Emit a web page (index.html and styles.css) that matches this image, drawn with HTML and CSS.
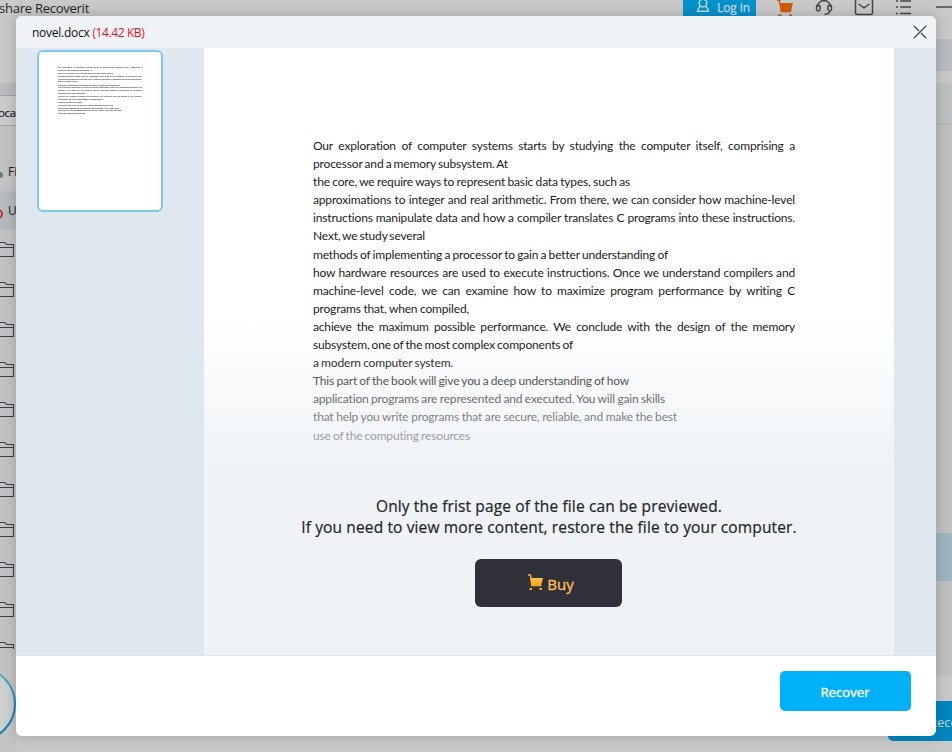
FILE: index.html
```html
<!DOCTYPE html>
<html lang="en">
<head>
<meta charset="utf-8">
<title>Recoverit</title>
<link rel="stylesheet" href="styles.css">
</head>
<body>
<svg width="0" height="0" class="defs" aria-hidden="true">
  <linearGradient id="ring" x1="0" y1="0" x2="0" y2="1"><stop offset="0" stop-color="#5bbfae"/><stop offset=".5" stop-color="#1585bd"/><stop offset="1" stop-color="#1179b4"/></linearGradient>
  <linearGradient id="gold" x1="0" y1="0" x2="0" y2="1"><stop offset="0" stop-color="#ffc24c"/><stop offset="1" stop-color="#ff9f1c"/></linearGradient>
  <symbol id="folder" viewBox="0 0 20 20"><path d="M0 2.500h4.500l2.500 2h6.500v12H0M0 7.500h13.500" fill="none" stroke="#3d4043" stroke-width="1.1"/></symbol>
</svg>
<div class="app">
  <header class="titlebar">
    <span class="brand">share Recoverit</span>
    <span class="tools">
      <span class="login"><svg width="14" height="16" viewBox="0 0 14 16" fill="none" stroke="#c5dce8" stroke-width="1.4"><circle cx="7" cy="5" r="3.8"/><path d="M4.500 8 Q2.300 9.500 1.500 13.300H12.500Q11.700 9.500 9.500 8"/></svg>Log in</span>
      <svg class="cart" width="18" height="18" viewBox="0 0 18 18"><path d="M1 .5h2.500l1.800 11h9.700" fill="none" stroke="#cf5808" stroke-width="1.400"/><path d="M3.600 3h13.400l-2 8.500h-10z" fill="#d45c08"/><path d="M2 14.500h3.500v2H2zM13 14.500h3v2h-3z" fill="#c85a12"/></svg>
      <svg class="phones" width="18" height="18" viewBox="0 0 18 18" fill="none" stroke="#45484b" stroke-width="1.500"><path d="M2.500 7C2.500 -1.500 15.500 -1.500 15.500 7"/><rect x="1.500" y="5" width="3.500" height="6" rx="1.700"/><rect x="13" y="5" width="3.500" height="6" rx="1.700"/><path d="M15 11.500Q13.500 14.300 9.500 14.500"/></svg>
      <svg class="mail" width="20" height="18" viewBox="0 0 20 18" fill="none" stroke="#45484b" stroke-width="1.500"><rect x="1.500" y="-1" width="17" height="15.500" rx="2"/><path d="M4.500 4l5.500 3.800L15.500 4"/></svg>
      <svg class="list" width="18" height="18" viewBox="0 0 18 18" fill="none" stroke="#45484b" stroke-width="1.500"><path d="M1 1h2m2 0h11M1 7h2m2 0h11M1 13.500h2m2 0h11"/></svg>
      <span class="minimize"></span>
    </span>
  </header>
  <div class="workspace">
    <aside class="tree">
      <div class="panel-head"></div>
      <div class="band"></div>
      <div class="tab">oca</div>
      <div class="gap"></div>
      <div class="item"><i class="dot"></i>Fi</div>
      <div class="item active"><i class="dot red"></i>U</div>
      <ul class="folders">
        <li><svg width="20" height="20"><use href="#folder"/></svg></li>
        <li><svg width="20" height="20"><use href="#folder"/></svg></li>
        <li><svg width="20" height="20"><use href="#folder"/></svg></li>
        <li><svg width="20" height="20"><use href="#folder"/></svg></li>
        <li><svg width="20" height="20"><use href="#folder"/></svg></li>
        <li><svg width="20" height="20"><use href="#folder"/></svg></li>
        <li><svg width="20" height="20"><use href="#folder"/></svg></li>
        <li><svg width="20" height="20"><use href="#folder"/></svg></li>
        <li><svg width="20" height="20"><use href="#folder"/></svg></li>
        <li><svg width="20" height="20"><use href="#folder"/></svg></li>
        <li class="cut"><svg width="20" height="20"><use href="#folder"/></svg></li>
      </ul>
      <svg class="ring" width="20" height="82" viewBox="0 0 20 82"><circle cx="-21" cy="40" r="36" fill="#cdcece" stroke="url(#ring)" stroke-width="2"/></svg>
    </aside>
    <section class="files">
      <div class="search"></div>
      <div class="spacer"></div>
      <div class="columns"></div>
      <div class="rows"><div class="selected"></div></div>
      <footer class="actions"><span class="bg-recover">Recover</span></footer>
    </section>
  </div>
</div>

<main class="modal">
  <header class="modal-head">
    <span>novel.docx <em>(14.42 KB)</em></span>
    <svg width="16" height="16" viewBox="0 0 16 16" stroke="#404346" stroke-width="1.300" fill="none"><path d="M2 2l5 5M9 9l5 5M14 2L2 14"/></svg>
  </header>
  <div class="viewer">
    <div class="rail"><div class="thumb"></div></div>
    <article class="page">
      <div class="doc">
        <p>Our exploration of computer systems starts by studying the computer itself, comprising a</p>
        <p>processor and a memory subsystem. At</p>
        <p>the core, we require ways to represent basic data types, such as</p>
        <p>approximations to integer and real arithmetic. From there, we can consider how machine-level</p>
        <p>instructions manipulate data and how a compiler translates C programs into these instructions.</p>
        <p>Next, we study several</p>
        <p>methods of implementing a processor to gain a better understanding of</p>
        <p>how hardware resources are used to execute instructions. Once we understand compilers and</p>
        <p>machine-level code, we can examine how to maximize program performance by writing C</p>
        <p>programs that, when compiled,</p>
        <p>achieve the maximum possible performance. We conclude with the design of the memory</p>
        <p>subsystem, one of the most complex components of</p>
        <p>a modern computer system.</p>
        <p>This part of the book will give you a deep understanding of how</p>
        <p>application programs are represented and executed. You will gain skills</p>
        <p>that help you write programs that are secure, reliable, and make the best</p>
        <p>use of the computing resources</p>
      </div>
      <div class="notice">
        <div>Only the frist page of the file can be previewed.</div>
        <div>If you need to view more content, restore the file to your computer.</div>
      </div>
      <button class="buy"><svg width="17" height="17" viewBox="0 0 17 17"><path d="M1 1h2.500l1.200 10.500h9.800" fill="none" stroke="#ffb02e" stroke-width="1.300"/><path d="M3.500 4H16l-2 7.500H4.500z" fill="url(#gold)"/><path d="M2.500 14h2.500v2H2.500zM12.500 14H15v2h-2.500z" fill="#ffad2b"/></svg><span>Buy</span></button>
    </article>
  </div>
  <footer class="modal-foot"><button class="recover">Recover</button></footer>
</main>
<script src="thumb.js"></script>
</body>
</html>
```
FILE: styles.css
```css
* { box-sizing: border-box; }
body { margin: 0; width: 952px; height: 752px; overflow: hidden; position: relative; font-family: "Open Sans", "Noto Sans", sans-serif; font-size: 12px; color: #222; }
button { border: 0; font-family: inherit; padding: 0; }
.defs { position: absolute; }

.app { height: 752px; background: #c9c9c9; display: flex; flex-direction: column; overflow: hidden; }
.titlebar { height: 39px; flex: none; display: flex; justify-content: space-between; align-items: flex-start; }
.brand { font-size: 13px; line-height: 16px; margin-left: -1px; white-space: nowrap; letter-spacing: -.25px; color: #262626; }
.tools { display: flex; align-items: flex-start; }
.login { width: 73px; height: 20px; background: #0492cd; color: #c5dce8; display: flex; gap: 7px; padding-left: 13px; font-size: 12px; line-height: 16px; margin-right: 20px; white-space: nowrap; letter-spacing: -.1px; -webkit-text-stroke: .25px #c5dce8; }
.login svg { margin-top: -2px; flex: none; }
.cart { margin-right: 21px; }
.phones { margin-right: 21px; }
.mail { margin-right: 21px; }
.list { margin-right: 23px; }
.minimize { width: 16px; height: 2px; background: #65686a; margin-top: 6px; }

.workspace { flex: 1; display: flex; justify-content: space-between; }
.tree { width: 16px; overflow: hidden; background: #c2c3c3; display: flex; flex-direction: column; white-space: nowrap; }
.panel-head { height: 44px; flex: none; background: #c9c9c9; }
.band { height: 12px; flex: none; background: #babcbe; }
.tab { height: 31px; flex: none; background: #cbcbcb; border-top: 1px solid #9fa5a8; border-bottom: 1px solid #9fa5a8; line-height: 34px; margin-left: -2px; font-size: 11.500px; letter-spacing: -.3px; -webkit-text-stroke: .2px #222; }
.gap { height: 25px; flex: none; }
.item { height: 40px; flex: none; display: flex; align-items: center; gap: 5px; font-size: 12px; }
.active { background: #b5babe; height: 39px; }
.dot { width: 6px; height: 6px; border-radius: 50%; background: #73797d; margin-left: -3px; margin-top: 7px; flex: none; }
.dot.red { width: 10px; height: 10px; margin-left: -7px; background: none; border: 2px solid #c52a3b; }
.folders { list-style: none; margin: 0; padding: 10px 0 0; flex: none; }
.folders li { height: 40px; }
.folders .cut { height: 9px; overflow: hidden; }
.folders svg { display: block; }
.ring { flex: none; margin-top: 15px; }

.files { width: 64px; display: flex; flex-direction: column; }
.search { height: 32px; background: #b7bbbf; }
.spacer { height: 12px; }
.columns { height: 41px; background: #bebfc0; border-bottom: 1px solid #aeb0b1; }
.rows { height: 553px; background: #c0c0c1; padding-top: 409px; }
.selected { height: 48px; background: #9eb5c0; }
.actions { padding-top: 24px; }
.bg-recover { display: block; height: 40px; border-radius: 5px 0 0 5px; background: #0385bf; color: #c0dae6; font-size: 13px; line-height: 42px; padding-left: 41px; overflow: hidden; white-space: nowrap; }

.modal { position: absolute; left: 16px; top: 16px; width: 920px; height: 720px; border-radius: 6px; overflow: hidden; background: #fff; display: flex; flex-direction: column; box-shadow: 0 0 14px rgba(0,0,0,.2); }
.modal-head { height: 32px; flex: none; background: #eff3f6; display: flex; justify-content: space-between; align-items: center; padding: 0 8px 0 16px; font-size: 12px; color: #111; letter-spacing: -.25px; }
.modal-head em { font-style: normal; color: #dc1430; letter-spacing: -.4px; }
.viewer { height: 608px; flex: none; background: #e0e7ee; border-bottom: 1px solid #dde3e8; display: flex; }
.rail { width: 188px; padding: 2px 0 0 21px; }
.thumb { width: 126px; height: 162px; border: 2px solid #7cc9ec; border-radius: 6px; background: #fff; overflow: hidden; padding: 14px 0 0 19px; }
.page { width: 690px; background: linear-gradient(#fff 0, #fff 270px, #eff3f6 420px); display: flex; flex-direction: column; align-items: center; }

.doc { align-self: flex-start; width: 482px; margin: 89px 0 0 109px; font-family: Lato, sans-serif; font-size: 12px; line-height: 18.100px; color: #1c1c1c; letter-spacing: -.17px; font-variant-ligatures: none; }
.doc p { margin: 0; width: 482px; white-space: nowrap; text-align: justify; text-align-last: justify; word-spacing: -1.500px; }
.doc p:nth-child(2) { width: 195px; }
.doc p:nth-child(3) { width: 317px; }
.doc p:nth-child(6) { width: 112px; }
.doc p:nth-child(7) { width: 355px; }
.doc p:nth-child(10) { width: 156px; }
.doc p:nth-child(12) { width: 260px; }
.doc p:nth-child(13) { width: 140px; }
.doc p:nth-child(14) { width: 316px; }
.doc p:nth-child(15) { width: 352px; }
.doc p:nth-child(16) { width: 364px; }
.doc p:nth-child(17) { width: 157px; }
.page .doc p:nth-child(13) { color: #333; }
.page .doc p:nth-child(14) { color: #55575a; }
.page .doc p:nth-child(15) { color: #6d6f72; }
.page .doc p:nth-child(16) { color: #818386; }
.page .doc p:nth-child(17) { color: #9c9ea1; }
.thumb .doc { margin: 0; transform: scale(.174, .160); transform-origin: 0 0; color: #000; }

.notice { margin-top: 51px; font-size: 15.500px; line-height: 21px; letter-spacing: .13px; -webkit-text-stroke: .22px #1e262c; color: #1e262c; text-align: center; white-space: nowrap; }
.buy { margin: 21px 1px 0 0; width: 147px; height: 48px; border-radius: 6px; background: #303038; color: #ffbd5a; font-size: 15px; -webkit-text-stroke: .35px #ffbd5a; display: flex; align-items: center; justify-content: center; gap: 3px; padding-left: 4px; }
.buy span { padding-top: 2px; }
.buy svg { margin-top: -1px; }
.modal-foot { flex: 1; display: flex; justify-content: flex-end; padding: 15px 25px 0 0; }
.recover { width: 131px; height: 40px; border-radius: 5px; background: #00b0f8; color: #fff; font-size: 13.200px; -webkit-text-stroke: .4px #fff; padding: 2px 1px 0 0; }
```
FILE: thumb.js
```js
// Fill the thumbnail with a miniature of the document page.
document.querySelector('.thumb').appendChild(document.querySelector('.page .doc').cloneNode(true));
```
